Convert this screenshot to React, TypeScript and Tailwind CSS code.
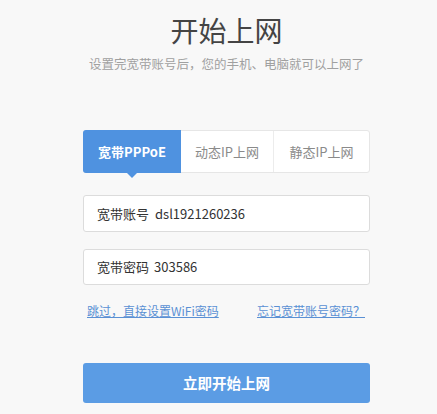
const font = { fontFamily: '"Microsoft YaHei", "Noto Sans CJK SC", "Noto Sans", sans-serif' }

export default function App() {
  return (
    <div className="min-h-[414px] w-[437px] bg-[#f8f8f8]" style={font}>
      <div className="ml-[83px] flex w-[287px] flex-col pt-[16px]">
        <h1 className="text-center text-[28px] leading-[28px] text-[#444]">开始上网</h1>
        <p className="mt-[13px] text-center text-[12.5px] leading-[14px] text-[#a0a0a0]">
          设置完宽带账号后，您的手机、电脑就可以上网了
        </p>

        <div className="mt-[59px] flex h-[43px] rounded-[3px] border border-[#e6e6e6] bg-white">
          <div className="relative -my-px -ml-px flex w-[98px] items-center justify-center rounded-l-[3px] bg-[#4f92e0] text-[13px] font-bold text-white">
            宽带PPPoE
            <span className="absolute -bottom-[5px] left-[44px] h-0 w-0 border-x-[5px] border-t-[5px] border-x-transparent border-t-[#4f92e0]" />
          </div>
          <div className="flex w-[93px] items-center justify-center border-r border-[#ececec] text-[13px] text-[#8a8a8a]">
            动态IP上网
          </div>
          <div className="flex flex-1 items-center justify-center text-[13px] text-[#8a8a8a]">
            静态IP上网
          </div>
        </div>

        <div className="mt-[22px] flex h-[37px] items-center rounded-[3px] border border-[#dcdcdc] bg-white px-[13px] text-[13px] text-[#333]">
          <span className="mr-[6px]">宽带账号</span>
          <span>dsl1921260236</span>
        </div>

        <div className="mt-[17px] flex h-[36px] items-center rounded-[3px] border border-[#dcdcdc] bg-white px-[13px] text-[13px] text-[#333]">
          <span className="mr-[5px]">宽带密码</span>
          <span>303586</span>
        </div>

        <div className="mt-[18px] flex justify-between pl-[4px] pr-[5px] text-[12px] leading-[16px] text-[#5a90d4]">
          <a href="#" className="underline underline-offset-1">跳过，直接设置WiFi密码</a>
          <a href="#" className="underline underline-offset-1">忘记宽带账号密码？</a>
        </div>

        <button className="mt-[44px] h-[40px] rounded-[3px] bg-[#5b9ce4] text-[14.5px] font-bold text-white">
          立即开始上网
        </button>
      </div>
    </div>
  )
}
